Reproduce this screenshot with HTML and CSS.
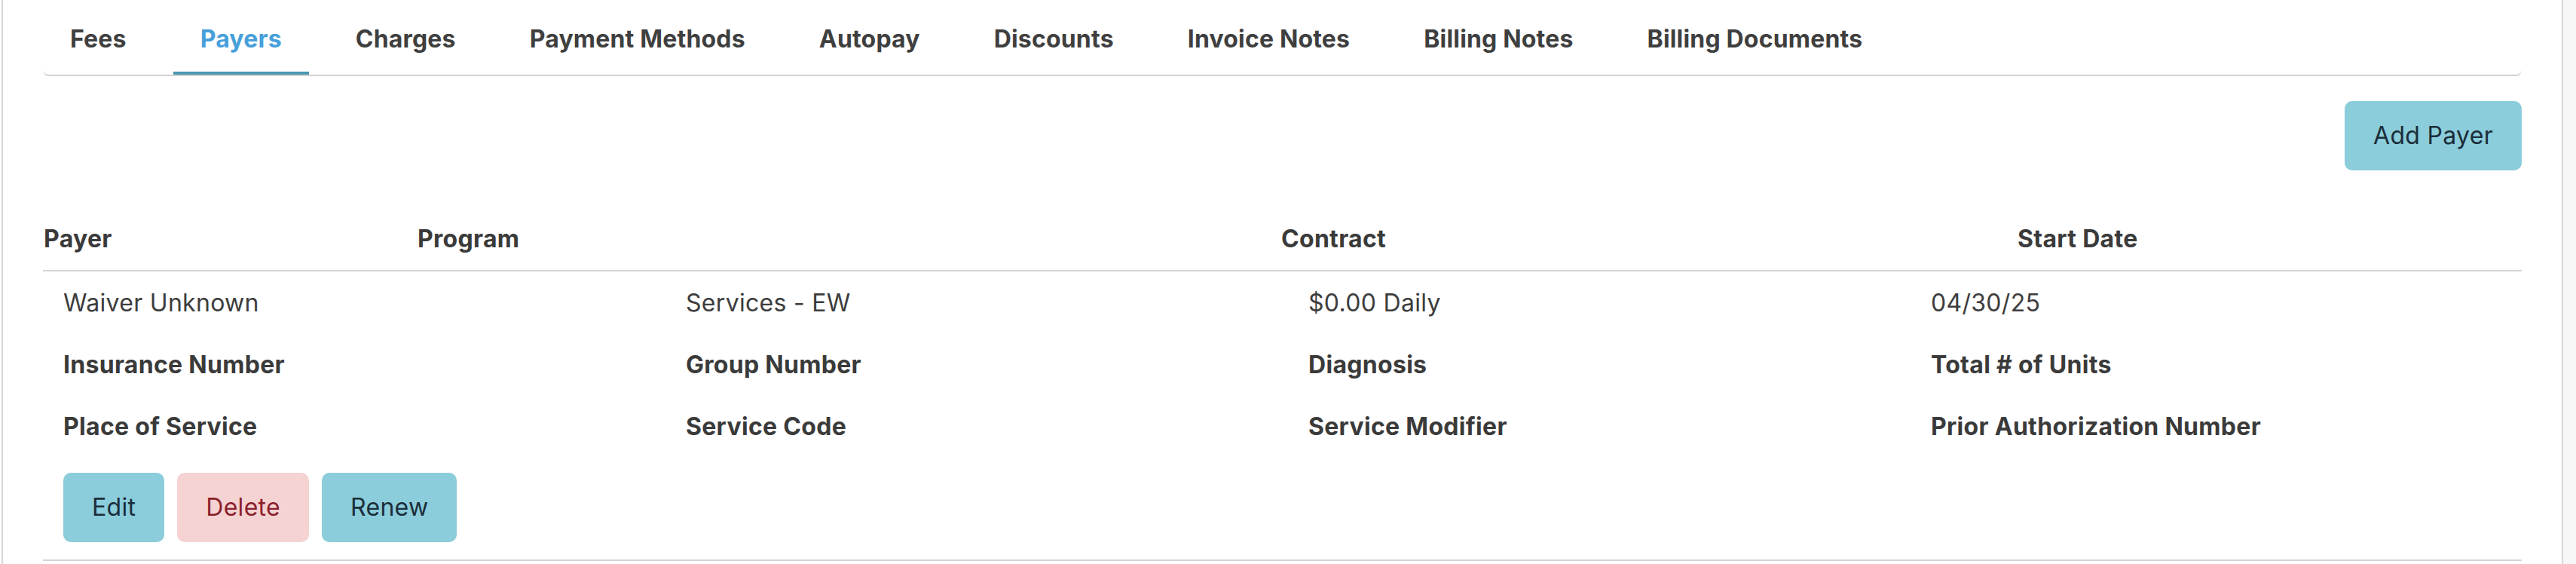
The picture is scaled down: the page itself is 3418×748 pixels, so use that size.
FILE: index.html
```html
<!DOCTYPE html>
<html lang="en">
<head>
<meta charset="utf-8">
<title>Payers</title>
<link rel="stylesheet" href="styles.css">
</head>
<body>
<div class="page">
  <main class="panel">
    <nav class="tabs">
      <a class="tab">Fees</a>
      <a class="tab active">Payers</a>
      <a class="tab">Charges</a>
      <a class="tab">Payment Methods</a>
      <a class="tab">Autopay</a>
      <a class="tab">Discounts</a>
      <a class="tab">Invoice Notes</a>
      <a class="tab">Billing Notes</a>
      <a class="tab">Billing Documents</a>
    </nav>
    <div class="toolbar">
      <button class="btn btn-info">Add Payer</button>
    </div>
    <div class="thead">
      <div class="th">Payer</div>
      <div class="th">Program</div>
      <div class="th">Contract</div>
      <div class="th">Start Date</div>
    </div>
    <div class="tbody">
      <div class="grid">
        <div class="cell">Waiver Unknown</div>
        <div class="cell">Services - EW</div>
        <div class="cell">$0.00 Daily</div>
        <div class="cell">04/30/25</div>
        <div class="cell label">Insurance Number</div>
        <div class="cell label">Group Number</div>
        <div class="cell label">Diagnosis</div>
        <div class="cell label">Total # of Units</div>
        <div class="cell label">Place of Service</div>
        <div class="cell label">Service Code</div>
        <div class="cell label">Service Modifier</div>
        <div class="cell label">Prior Authorization Number</div>
      </div>
      <div class="actions">
        <button class="btn btn-info">Edit</button>
        <button class="btn btn-danger">Delete</button>
        <button class="btn btn-info">Renew</button>
      </div>
    </div>
  </main>
  <div class="gutter"></div>
</div>
</body>
</html>
```

FILE: styles.css
```css
* { box-sizing: border-box; }
html, body { margin: 0; padding: 0; }
body {
  background: #ffffff;
  font-family: Inter, "Liberation Sans", sans-serif;
  font-size: 32px;
  line-height: 48px;
  letter-spacing: 0.3px;
  color: #3d3d3d;
}
.page {
  display: flex;
  min-height: 748px;
}
.panel {
  margin-left: 2px;
  width: 3399px;
  flex: none;
  border-left: 2px solid #d6d6d6;
  border-right: 2px solid #d6d6d6;
  background: #ffffff;
  padding: 16px 53px 0 53px;
}
.gutter {
  flex: 1;
  background: #f7f7f7;
}
.tabs {
  display: flex;
  gap: 26px;
  border-bottom: 2px solid #d2d2d2;
  border-radius: 0 0 8px 8px;
}
.tab {
  display: block;
  padding: 12px 36px 19px;
  border-bottom: 4px solid transparent;
  font-weight: 700;
  letter-spacing: 0.18px;
  color: #3f3f3f;
  white-space: nowrap;
}
.tab.active {
  color: #47a0da;
  border-bottom-color: #4a97b0;
}
.toolbar {
  display: flex;
  justify-content: flex-end;
  margin-top: 33px;
}
.btn {
  font-family: inherit;
  font-size: 32px;
  line-height: 48px;
  letter-spacing: 0.3px;
  font-weight: 400;
  padding: 22px 38px;
  border: 0;
  border-radius: 10px;
  color: #1b2d3a;
  cursor: pointer;
}
.btn-info { background: #8bcddb; }
.btn-danger { background: #f5d3d3; color: #8b1f2b; }
.thead {
  display: grid;
  grid-template-columns: 496px 1146px 977px 1fr;
  margin-top: 50px;
  padding: 17px 0 17px 1px;
  border-bottom: 2px solid #d4d4d4;
  font-weight: 700;
  color: #3a3a3a;
}
.tbody {
  padding: 18px 0 23px 27px;
  border-bottom: 2px solid #d4d4d4;
}
.grid {
  display: grid;
  grid-template-columns: 826px 826px 826px 1fr;
  row-gap: 34px;
}
.cell { white-space: nowrap; }
.label { font-weight: 700; color: #3a3a3a; }
.actions {
  display: flex;
  gap: 17px;
  margin-top: 37px;
}
```
